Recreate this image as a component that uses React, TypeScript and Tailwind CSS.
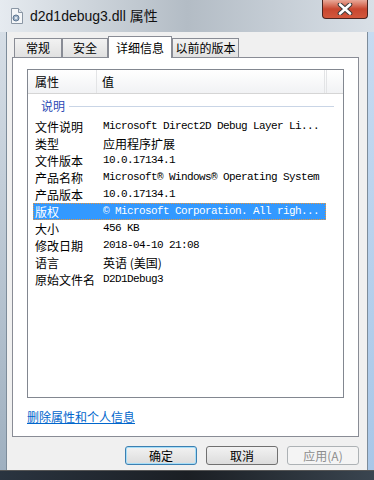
import React from "react";

const cjk = { fontFamily: '"Noto Sans CJK SC", "Noto Sans", sans-serif' };
const mono = { fontFamily: '"Liberation Mono", "Noto Sans CJK SC", monospace' };

const tabs = [
  { label: "常规", w: "w-[48px]" },
  { label: "安全", w: "w-[46px]" },
  { label: "详细信息", w: "w-[64px]", active: true },
  { label: "以前的版本", w: "w-[67px]" },
];

const rows: { k: string; v: string; cn?: boolean; sel?: boolean }[] = [
  { k: "文件说明", v: "Microsoft Direct2D Debug Layer Li..." },
  { k: "类型", v: "应用程序扩展", cn: true },
  { k: "文件版本", v: "10.0.17134.1" },
  { k: "产品名称", v: "Microsoft® Windows® Operating System" },
  { k: "产品版本", v: "10.0.17134.1" },
  { k: "版权", v: "© Microsoft Corporation. All righ...", sel: true },
  { k: "大小", v: "456 KB" },
  { k: "修改日期", v: "2018-04-10 21:08" },
  { k: "语言", v: "英语 (美国)", cn: true },
  { k: "原始文件名", v: "D2D1Debug3" },
];

function FileIcon() {
  return (
    <svg width="14" height="16" viewBox="0 0 14 16">
      <path d="M1.5 0.5h7l4 4v11h-11z" fill="#f4f6f8" stroke="#8a96a4" />
      <path d="M8.5 0.5v4h4" fill="#dde3ea" stroke="#8a96a4" />
      <circle cx="6" cy="10" r="3" fill="#9fb3c8" stroke="#5d7590" />
      <circle cx="6" cy="10" r="1" fill="#f4f6f8" />
    </svg>
  );
}

function CloseGlyph() {
  return (
    <svg width="16" height="12" viewBox="0 0 16 12">
      <path d="M3 1.5 L13 10.5 M13 1.5 L3 10.5" stroke="#3b3b3b" strokeWidth="4.6" strokeLinecap="round" />
      <path d="M3 1.5 L13 10.5 M13 1.5 L3 10.5" stroke="#ffffff" strokeWidth="2.6" strokeLinecap="round" />
    </svg>
  );
}

export default function App() {
  return (
    <div className="relative w-[374px] h-[480px] overflow-hidden flex flex-col bg-[#c9d3dc]" style={cjk}>
      {/* title bar */}
      <div className="h-[32px] flex items-start bg-gradient-to-r from-[#e6ebf0] via-[#b3bcc5] to-[#d9e0e7]">
        <div className="flex items-center gap-[6px] pl-[10px] pt-[8px]">
          <FileIcon />
          <span className="text-[14px] text-[#111] leading-none" style={{ fontFamily: '"Liberation Sans", "Noto Sans CJK SC", sans-serif' }}>
            d2d1debug3.dll 属性
          </span>
        </div>
        <div className="ml-auto mr-[6px] w-[46px] h-[19px] rounded-b-[4px] border border-t-0 border-[#4a2420] bg-gradient-to-b from-[#e8a898] via-[#c8462f] to-[#d2573c] flex items-center justify-center">
          <CloseGlyph />
        </div>
      </div>

      {/* body with side frames */}
      <div className="flex h-[438px]">
        <div className="w-[7px] bg-gradient-to-b from-[#d6dee6] to-[#9fb0c0] border-r border-[#7d8c9a]" />
        <div className="w-[360px] bg-[#f0f0f0] flex flex-col">
          {/* tabs */}
          <div className="flex items-end h-[25px] pl-[7px]">
            {tabs.map((t) =>
              t.active ? (
                <div
                  key={t.label}
                  className={`${t.w} h-[22px] -mb-px relative z-10 bg-white border border-b-0 border-[#898c95] flex items-center justify-center text-[12px] text-black`}
                >
                  {t.label}
                </div>
              ) : (
                <div
                  key={t.label}
                  className={`${t.w} h-[19px] bg-gradient-to-b from-[#f2f2f2] to-[#e1e1e1] border border-b-0 border-[#898c95] flex items-center justify-center text-[12px] text-black`}
                >
                  {t.label}
                </div>
              )
            )}
          </div>

          {/* tab page */}
          <div className="ml-[5px] w-[347px] h-[380px] bg-white border border-[#898c95] flex flex-col pl-[14px] pt-[11px]">
            <div className="w-[317px] h-[329px] border border-[#828790] flex flex-col">
              {/* header */}
              <div className="h-[24px] flex items-stretch text-[12px] text-black bg-gradient-to-b from-white to-[#f1f2f4] border-b border-[#d5d5d5]">
                <div className="w-[69px] pl-[7px] flex items-center border-r border-[#e3e4e6]">属性</div>
                <div className="w-[228px] pl-[5px] flex items-center border-r border-[#e3e4e6]">值</div>
                <div className="w-[2px] border-r border-[#e3e4e6]" />
              </div>

              {/* group */}
              <div className="h-[24px] flex items-center pl-[13px] pr-[9px] gap-[4px]">
                <span className="text-[12px] text-[#2b49b5]">说明</span>
                <div className="flex-1 h-px bg-[#c9d5e6]" />
              </div>

              {/* rows */}
              <div className="flex flex-col pl-[5px]">
                {rows.map((r) => (
                  <div
                    key={r.k}
                    className={`w-[293px] h-[17px] flex items-center ${
                      r.sel ? "bg-[#3399ff] text-white outline-1 outline-dotted outline-[#e8953c] -outline-offset-1" : "text-black"
                    }`}
                  >
                    <div className="w-[70px] pl-[2px] text-[12px] whitespace-nowrap">{r.k}</div>
                    {r.cn ? (
                      <div className="text-[12px] whitespace-nowrap">{r.v}</div>
                    ) : (
                      <div className="text-[11px] tracking-[-0.6px] whitespace-nowrap" style={mono}>
                        {r.v}
                      </div>
                    )}
                  </div>
                ))}
              </div>
            </div>

            <div className="mt-[10px] text-[12px] text-[#0066cc] underline">删除属性和个人信息</div>
          </div>

          {/* buttons */}
          <div className="flex gap-[9px] pl-[118px] pt-[9px]">
            <div className="w-[72px] h-[19px] rounded-[3px] border border-[#3c7fb1] shadow-[inset_0_0_0_1px_#a6def8] bg-gradient-to-b from-[#f2f2f2] to-[#dcdcdc] flex items-center justify-center text-[12px] text-black">
              确定
            </div>
            <div className="w-[72px] h-[19px] rounded-[3px] border border-[#707070] bg-gradient-to-b from-[#f2f2f2] to-[#dcdcdc] flex items-center justify-center text-[12px] text-black">
              取消
            </div>
            <div className="w-[72px] h-[19px] rounded-[3px] border border-[#adb2b5] bg-[#f4f4f4] flex items-center justify-center text-[12px] text-[#8d8d8d]">
              应用(A)
            </div>
          </div>
        </div>
        <div className="w-[7px] bg-gradient-to-b from-[#c6dbf1] to-[#a9c7e8] border-l border-[#7d8c9a]" />
      </div>

      {/* bottom frame */}
      <div className="flex-1 bg-gradient-to-r from-[#2a3440] via-[#1b1f24] to-[#3a4550] border-t border-[#555]" />
    </div>
  );
}
